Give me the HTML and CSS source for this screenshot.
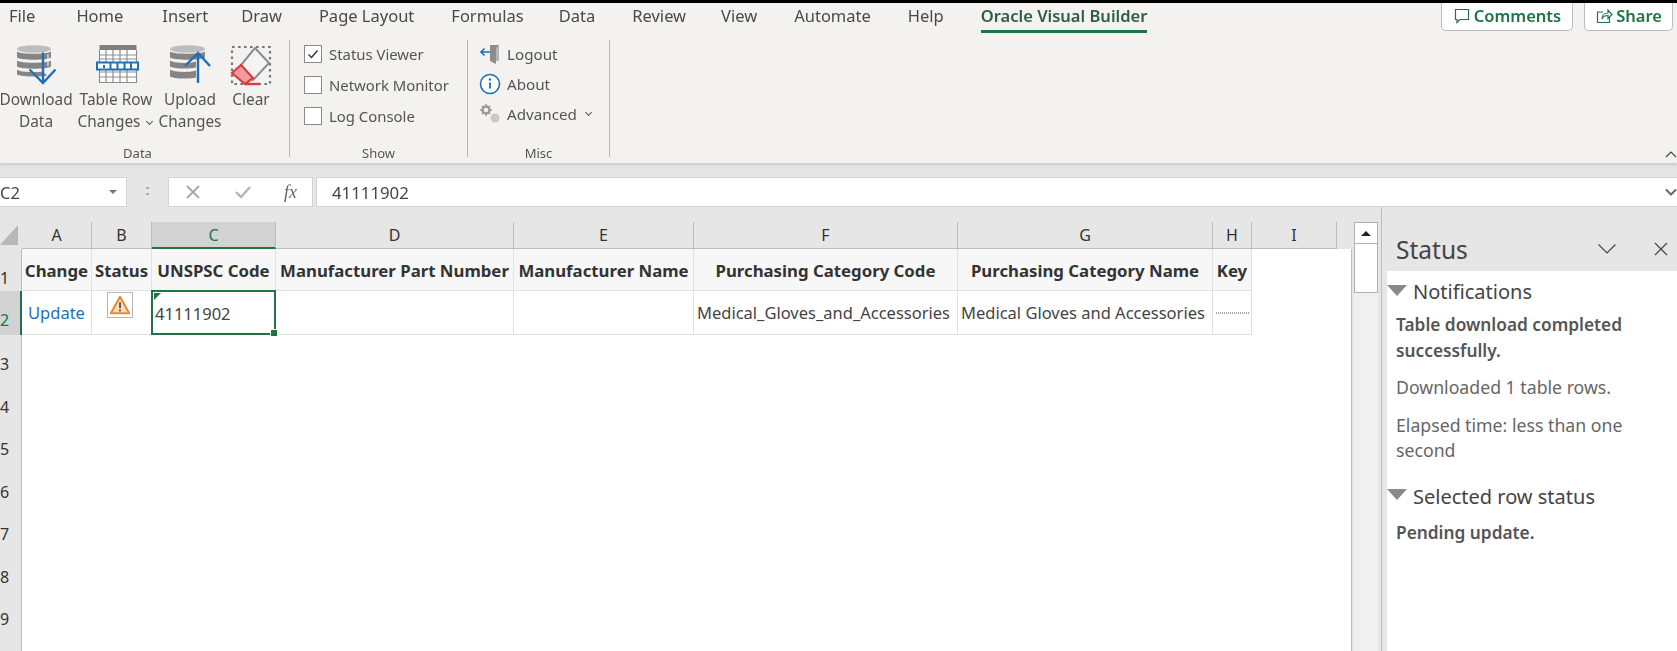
FILE: index.html
```html
<!DOCTYPE html>
<html lang="en">
<head>
<meta charset="utf-8">
<title>Oracle Visual Builder - Excel</title>
<link rel="stylesheet" href="styles.css">
</head>
<body>
<div class="app">
  <header class="tabs">
    <nav class="tablist">
      <span class="tab">File</span><span class="tab">Home</span><span class="tab">Insert</span><span class="tab">Draw</span><span class="tab">Page Layout</span><span class="tab">Formulas</span><span class="tab">Data</span><span class="tab">Review</span><span class="tab">View</span><span class="tab">Automate</span><span class="tab">Help</span><span class="tab tab-active">Oracle Visual Builder</span>
    </nav>
    <div class="actions">
      <button class="action action-comments"><svg width="18" height="18" viewBox="0 0 18 18" fill="none" stroke="#217346" stroke-width="1.2"><path d="M2.5 2.5h13v10H7l-3 3v-3H2.5z"/></svg>Comments</button>
      <button class="action action-share"><svg width="18" height="18" viewBox="0 0 18 18" fill="none" stroke="#217346" stroke-width="1.2"><path d="M8 5H2.5v10.5h12V10M7 12c0-4 3-6 6-6V3l4 4.5-4 4V8.500c-2.500 0-5 1-6 3.500z"/></svg>Share</button>
    </div>
  </header>
  <section class="ribbon">
    <div class="group group-data">
      <div class="group-body">
        <div class="big big-download">
          <svg class="big-icon" width="44" height="44" viewBox="0 0 44 44"><ellipse cx="19" cy="5" rx="17" ry="3.800" fill="#bdbdbd"/><path d="M2 7.500c3 3 31 3 34 0v6c-3 3-31 3-34 0zM2 16.500c3 3 31 3 34 0v6c-3 3-31 3-34 0zM2 25.500c3 3 20 3 26 2l4 4c-8 2-27 1-30-1z" fill="#858585"/><path d="M33 10v12" stroke="#f3f2f1" stroke-width="1"/><path d="M28 8.500v29M14.500 25.500l13.500 13.500 12.500-13.500" fill="none" stroke="#1f6fb7" stroke-width="2.400"/></svg>
          <span>Download<br>Data</span>
        </div>
        <div class="big big-table">
          <svg class="big-icon" width="44" height="44" viewBox="0 0 44 44"><rect x="3" y="1" width="38" height="38" fill="#fff"/><path d="M3.500 1h37v5h-37z" fill="#7f7f7f"/><path d="M3 11h38M3 15h38M3 28h38M3 33h38M3 38.500h38M10 6v14M17 6v14M24 6v14M31 6v14M10 24v15M17 24v15M24 24v15M31 24v15M3.500 6v33M40.500 6v33" stroke="#8f8f8f" stroke-width="1.200" fill="none"/><rect x="1" y="18.500" width="41" height="7" fill="#fff" stroke="#1f6fb7" stroke-width="2"/><path d="M8 21v3M14.500 19v6M21.500 19v6M28.500 19v6M35 19v6" stroke="#1f6fb7" stroke-width="2"/></svg>
          <span>Table Row<br>Changes <i class="caret"></i></span>
        </div>
        <div class="big big-upload">
          <svg class="big-icon" width="44" height="44" viewBox="0 0 44 44"><ellipse cx="19.500" cy="5" rx="17.500" ry="3.800" fill="#bdbdbd"/><path d="M2 7.500c3 3 32 3 35 0v6c-3 3-32 3-35 0zM2 16.500c3 3 22 3 26 1v6c-8 2-23 1-26-1zM2 25.500c3 3 22 3 26 1v7c-8 2-23 1-26-1z" fill="#858585"/><path d="M30 10v29M17 22l13-13 12 13" fill="none" stroke="#1f6fb7" stroke-width="2.400"/></svg>
          <span>Upload<br>Changes</span>
        </div>
        <div class="big big-clear">
          <svg class="big-icon" width="44" height="44" viewBox="0 0 44 44"><rect x="3" y="3" width="38" height="37" fill="none" stroke="#777" stroke-width="2.200" stroke-dasharray="2.600 3.400"/><path d="M26 4l14 15-16 17-12-15z" fill="#f4f4f4" stroke="#8c8c8c" stroke-width="2"/><path d="M12 21l-9 8 13 11 8-6z" fill="#f19ca1" stroke="#dc3a40" stroke-width="2.200"/><path d="M16 40h15" stroke="#dc3a40" stroke-width="2.400"/></svg>
          <span>Clear</span>
        </div>
      </div>
      <div class="group-label">Data</div>
    </div>
    <div class="group group-show">
      <div class="group-body stack">
        <label class="check"><span class="box box-on"><svg width="12" height="12" viewBox="0 0 12 12" fill="none" stroke="#333" stroke-width="1.400"><path d="M1.500 6.500l3 3 6-7"/></svg></span>Status Viewer</label>
        <label class="check"><span class="box"></span>Network Monitor</label>
        <label class="check"><span class="box"></span>Log Console</label>
      </div>
      <div class="group-label">Show</div>
    </div>
    <div class="group group-misc">
      <div class="group-body stack">
        <div class="mini"><svg width="22" height="22" viewBox="0 0 22 22"><path d="M11 2h9v16h-9z" fill="#b5b5b5"/><path d="M11 2h9l-3 3v16l-6-3z" fill="#8c8c8c"/><path d="M11 9H2M5.500 5.500L2 9l3.500 3.500" fill="none" stroke="#1f6fb7" stroke-width="1.600"/></svg>Logout</div>
        <div class="mini"><svg width="22" height="22" viewBox="0 0 22 22"><circle cx="11" cy="11" r="9.500" fill="#fff" stroke="#1f6fb7" stroke-width="1.600"/><path d="M11 9.500v6" stroke="#1f6fb7" stroke-width="1.800"/><circle cx="11" cy="6.500" r="1.200" fill="#1f6fb7"/></svg>About</div>
        <div class="mini"><svg width="22" height="22" viewBox="0 0 22 22"><circle cx="7" cy="7" r="3.500" fill="none" stroke="#999" stroke-width="2.400"/><path d="M7 1v2M7 11v2M1 7h2M11 7h2M3 3l1.500 1.500M9.500 9.500L11 11M3 11l1.500-1.500M9.500 4.500L11 3" stroke="#999" stroke-width="1.500"/><circle cx="16" cy="15" r="4.500" fill="#c9c9c9"/></svg>Advanced <i class="caret"></i></div>
      </div>
      <div class="group-label">Misc</div>
    </div>
    <svg class="collapse" width="12" height="8" viewBox="0 0 12 8" fill="none" stroke="#444" stroke-width="1.200"><path d="M1 7l5-5 5 5"/></svg>
  </section>
  <section class="formula">
    <div class="namebox"><span>C2</span><i class="drop"></i></div>
    <div class="grip"></div>
    <div class="fbtns">
      <svg width="16" height="16" viewBox="0 0 16 16" stroke="#a6a6a6" stroke-width="1.800"><path d="M2 2l12 12M14 2L2 14"/></svg>
      <svg width="18" height="16" viewBox="0 0 18 16" fill="none" stroke="#b5b5b5" stroke-width="2.400"><path d="M2 8l5 5L16 3"/></svg>
      <span class="fx">fx</span>
    </div>
    <div class="finput"><span>41111902</span><svg width="12" height="8" viewBox="0 0 12 8" fill="none" stroke="#666" stroke-width="2"><path d="M1 1.500l5 5 5-5"/></svg></div>
  </section>
  <main class="work">
    <div class="sheet">
      <div class="corner"><i></i></div>
      <div class="ch">A</div><div class="ch">B</div><div class="ch ch-sel">C</div><div class="ch">D</div><div class="ch">E</div><div class="ch">F</div><div class="ch">G</div><div class="ch">H</div><div class="ch">I</div><div class="ch ch-end"></div>

      <div class="rh">1</div>
      <div class="c hd">Change</div><div class="c hd">Status</div><div class="c hd">UNSPSC Code</div><div class="c hd">Manufacturer Part Number</div><div class="c hd">Manufacturer Name</div><div class="c hd">Purchasing Category Code</div><div class="c hd">Purchasing Category Name</div><div class="c hd">Key</div><div class="c blank span2"></div>

      <div class="rh rh-sel">2</div>
      <div class="c link">Update</div>
      <div class="c warn"><span class="warnbox"><svg width="22" height="22" viewBox="0 0 24 22"><path d="M12 2L2 20h20z" fill="#fcdcb8" stroke="#e8893a" stroke-width="2.200" stroke-linejoin="round"/><path d="M12 8v6.500" stroke="#555" stroke-width="2"/><circle cx="12" cy="17" r="1.200" fill="#555"/></svg></span></div>
      <div class="c sel"><span>41111902</span><i class="tri"></i><i class="handle"></i></div>
      <div class="c"></div><div class="c"></div>
      <div class="c txt">Medical_Gloves_and_Accessories</div>
      <div class="c txt">Medical Gloves and Accessories</div>
      <div class="c keycell"><i></i></div>
      <div class="c blank span2"></div>

      <div class="rh">3</div><div class="blank full"></div>
      <div class="rh">4</div><div class="blank full"></div>
      <div class="rh">5</div><div class="blank full"></div>
      <div class="rh">6</div><div class="blank full"></div>
      <div class="rh">7</div><div class="blank full"></div>
      <div class="rh">8</div><div class="blank full"></div>
      <div class="rh">9</div><div class="blank full"></div>
      <div class="rh rh-last"></div><div class="blank full"></div>
    </div>
    <div class="vscroll">
      <div class="sb-up"><i></i></div>
      <div class="sb-thumb"></div>
    </div>
    <aside class="pane">
      <div class="pane-head">
        <span class="pane-title">Status</span>
        <svg class="pane-chev" width="20" height="12" viewBox="0 0 20 12" fill="none" stroke="#444" stroke-width="1.200"><path d="M1.500 1.500l8.500 8.500 8.500-8.500"/></svg>
        <svg width="14" height="14" viewBox="0 0 14 14" stroke="#444" stroke-width="1.200"><path d="M1 1l12 12M13 1L1 13"/></svg>
      </div>
      <div class="pane-body">
        <h2 class="sec"><i></i>Notifications</h2>
        <p class="msg strong">Table download completed successfully.</p>
        <p class="msg">Downloaded 1 table rows.</p>
        <p class="msg">Elapsed time: less than one second</p>
        <h2 class="sec sec-2"><i></i>Selected row status</h2>
        <p class="msg strong after-sec2">Pending update.</p>
      </div>
    </aside>
  </main>
</div>
</body>
</html>
```

FILE: styles.css
```css
* { box-sizing: border-box; }
html, body { margin: 0; height: 100%; overflow: hidden; }
body { font-family: "Noto Sans", "Open Sans", sans-serif; color: #444; background: #e6e6e6; }
.app { width: 1677px; height: 651px; display: flex; flex-direction: column; overflow: hidden; filter: blur(.3px); }

.tabs { height: 33px; margin-top: 3px; background: #f3f2f1; display: flex; justify-content: space-between; box-shadow: 0 -3px 0 #000; }
.tablist { display: flex; gap: 37px; padding-left: 9px; font-size: 16.500px; line-height: 26px; color: #4a4a4a; }
.tab { height: 30px; white-space: nowrap; }
.tab:nth-child(2) { margin-left: 4px; }
.tab:nth-child(3) { margin-left: 2px; }
.tab:nth-child(4) { margin-left: -4px; }
.tab:nth-child(7) { margin-left: -2px; }
.tab:nth-child(9) { margin-left: -2px; }
.tab-active { font-weight: 600; color: #2f5d44; border-bottom: 3px solid #217346; }
.actions { display: flex; gap: 11px; padding-right: 4px; }
.action { height: 28px; display: flex; align-items: center; gap: 3px; background: #fff; border: 1px solid #bdbdbd; border-top: 0; border-radius: 0 0 5px 5px; font: 600 16.500px "Noto Sans", sans-serif; color: #217346; padding: 0 0 2px; justify-content: center; }
.action-comments { width: 132px; }
.action-share { width: 89px; }

.ribbon { height: 127px; background: #f3f2f1; display: flex; position: relative; box-shadow: 0 2px 3px rgba(0,0,0,.12); z-index: 1; }
.group { display: flex; flex-direction: column; height: 117px; margin-top: 4px; border-right: 1px solid #b5b5b5; }
.group-body { flex: 1; display: flex; min-height: 0; }
.group-label { height: 14px; text-align: center; font-size: 13px; line-height: 20px; color: #555; }
.group-data { width: 290px; }
.group-data .group-label { padding-right: 14px; }
.group-show { width: 178px; }
.group-misc { width: 142px; }
.big { display: flex; flex-direction: column; align-items: center; text-align: center; font-size: 15.400px; line-height: 21.500px; color: #555; white-space: nowrap; padding-top: 4px; }
.big-icon { flex: none; margin-bottom: 1px; }
.big-download { width: 72px; }
.big-table { width: 80px; margin-left: 4px; }
.big-upload { width: 66px; margin-left: 1px; }
.big-clear { width: 42px; margin-left: 7px; }
.big-download .big-icon { margin-left: 2px; }
.big-table .big-icon { margin-left: 4px; }
.caret { display: inline-block; width: 5px; height: 5px; border-right: 1.300px solid #555; border-bottom: 1.300px solid #555; transform: rotate(45deg); margin: 0 2px 3px 3px; }
.stack { flex-direction: column; gap: 9px; padding-top: 3px; }
.group-show .stack { padding-left: 14px; }
.group-misc .stack { padding-left: 11px; gap: 8px; }
.check { display: flex; align-items: center; gap: 7px; height: 22px; font-size: 14.900px; color: #555; white-space: nowrap; }
.box { width: 18px; height: 18px; background: #fff; border: 1.500px solid #8a8a8a; display: flex; align-items: center; justify-content: center; }
.mini { display: flex; align-items: center; gap: 6px; height: 22px; font-size: 15.200px; color: #555; white-space: nowrap; }
.collapse { position: absolute; right: 0; bottom: 5px; }

.formula { height: 44px; display: flex; padding-top: 14px; background: #e6e6e6; font-size: 16.500px; }
.namebox { width: 127px; height: 30px; background: #fff; border: 1px solid #d4d4d4; border-left: 0; display: flex; align-items: center; justify-content: space-between; padding-right: 9px; color: #444; }
.drop { width: 0; height: 0; border-left: 4px solid transparent; border-right: 4px solid transparent; border-top: 4px solid #777; }
.grip { width: 41px; height: 30px; background: radial-gradient(circle, #aaa 1.300px, transparent 1.500px) 19px 8px / 3px 6px repeat-y; background-clip: content-box; padding: 8px 0; }
.fbtns { width: 145px; height: 30px; background: #fff; border: 1px solid #d4d4d4; display: flex; align-items: center; justify-content: space-between; padding: 0 15px 0 16px; }
.fx { font: italic 18px "Liberation Serif", serif; color: #666; }
.finput { flex: 1; height: 30px; margin-left: 3px; background: #fff; border: 1px solid #d4d4d4; border-right: 0; display: flex; align-items: center; justify-content: space-between; padding: 0 0 0 15px; color: #444; font-size: 16.800px; }

.work { flex: 1; display: flex; min-height: 0; background: #e6e6e6; }
.sheet { width: 1352px; flex: none; margin-top: 15px; display: grid; grid-template-columns: 22px 70px 60px 124px 238px 180px 264px 255px 39px 85px 15px; grid-template-rows: 27px 42px 44px repeat(7, 42.500px) 1fr; }
.corner { background: #e6e6e6; padding: 3px 0 0 0; }
.corner i { display: block; width: 18px; height: 20px; background: #b8b8b8; clip-path: polygon(100% 0, 100% 100%, 0 100%); }
.ch { background: #e6e6e6; border-right: 1px solid #bcbcbc; border-bottom: 1px solid #bcbcbc; text-align: center; font-size: 16px; line-height: 27px; color: #333; }
.ch-sel { background: #d2d2d2; color: #217346; border-bottom: 2px solid #217346; }
.ch-end { border-right: 0; border-bottom: 0; }
.rh { background: #e6e6e6; font-size: 16px; line-height: 20px; padding-top: 19px; color: #333; border-right: 1px solid #bcbcbc; overflow: hidden; }
.rh-sel { background: #d2d2d2; color: #217346; border-right: 2px solid #217346; }
.c { background: #fff; border-right: 1px solid #e1e1e1; border-bottom: 1px solid #e1e1e1; font-size: 16.500px; display: flex; align-items: center; white-space: nowrap; overflow: hidden; position: relative; min-width: 0; }
.hd { background: #f7f7f7; font-weight: 700; font-size: 16.800px; color: #333; justify-content: center; padding-top: 2px; }
.blank { background: #fff; }
.span2 { grid-column: span 2; border-right: 1px solid #bcbcbc; border-bottom: 0; }
.full { grid-column: span 10; border-right: 1px solid #bcbcbc; }
.link { color: #1f6fb7; justify-content: center; }
.warn { justify-content: center; align-items: flex-start; padding: 1px 3px 0 0; }
.warnbox { width: 26px; height: 26px; border: 1px solid #b5b5b5; display: flex; align-items: center; justify-content: center; background: #fff; }
.sel { overflow: visible; border: 2px solid #217346; padding-left: 2px; margin: -1px 0 0 -1px; z-index: 2; color: #444; }
.sel span { padding-top: 2px; }
.tri { position: absolute; left: 1px; top: 1px; width: 0; height: 0; border-top: 7px solid #217346; border-right: 7px solid transparent; }
.handle { position: absolute; right: -3px; bottom: -3px; width: 6px; height: 6px; background: #217346; outline: 1px solid #fff; }
.txt { padding-left: 3px; }
.keycell { justify-content: center; }
.keycell i { width: 33px; height: 2px; background: repeating-linear-gradient(90deg, #a8a8a8 0 1px, transparent 1px 2px); }

.vscroll { width: 24px; flex: none; margin: 15px 0 0 2px; background: #f0f0f0; }
.sb-up { height: 22px; background: #fff; border: 1px solid #b0b0b0; display: flex; align-items: center; justify-content: center; }
.sb-up i { width: 0; height: 0; border-left: 5px solid transparent; border-right: 5px solid transparent; border-bottom: 5px solid #222; }
.sb-thumb { height: 49px; background: #fff; border: 1px solid #b0b0b0; border-top: 0; }

.pane { flex: 1; margin-left: 3px; border-left: 1px solid #bcbcbc; display: flex; flex-direction: column; min-width: 0; }
.pane-head { height: 64px; padding: 20px 9px 0 14px; display: flex; align-items: center; }
.pane-title { font-size: 24.500px; color: #444; flex: 1; }
.pane-chev { margin-right: 37px; }
.pane-body { flex: 1; margin-left: 5px; background: #fff; padding: 8px 10px 0 9px; }
.sec { margin: 0 0 0 -9px; font-size: 20px; font-weight: 400; color: #444; display: flex; align-items: center; gap: 6px; line-height: 26px; }
.sec i { width: 0; height: 0; margin-top: -4px; border-left: 10px solid transparent; border-right: 10px solid transparent; border-top: 11px solid #8a8a8a; }
.sec-2 { margin-top: 20px; }
.msg { margin: 12px 0 0; font-size: 17.700px; line-height: 25.500px; color: #666; }
.strong { font-weight: 600; font-size: 17.300px; color: #555; margin-top: 7px; }
.after-sec2 { margin-top: 10px; }
```
